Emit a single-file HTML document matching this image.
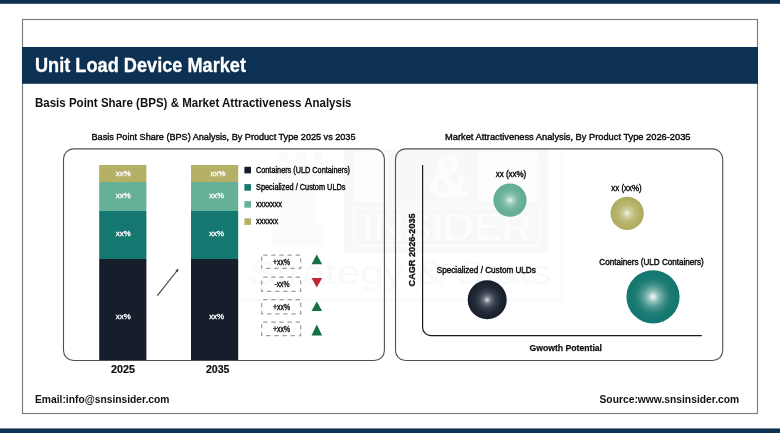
<!DOCTYPE html>
<html lang="en">
<head>
<meta charset="utf-8">
<title>Unit Load Device Market</title>
<style>
html,body{margin:0;padding:0;background:#fff;}
body{width:780px;height:433px;overflow:hidden;}
svg{display:block;font-family:"Liberation Sans", Arial, Helvetica, sans-serif;will-change:transform;}
text{white-space:pre;}
</style>
</head>
<body>
<svg width="780" height="433" viewBox="0 0 780 433">
<rect x="0" y="0" width="780" height="433" fill="#ffffff"/>
<g id="wm"><rect x="343.7" y="149.5" width="204.5" height="103.4" fill="#f7f8fa"/><rect x="354" y="151" width="35" height="51" rx="6" fill="#fdfdfe"/><rect x="478.4" y="151" width="61" height="51" rx="6" fill="#fdfdfe"/><rect x="354" y="208" width="185.3" height="37.5" fill="none" stroke="#fdfdfe" stroke-width="1.6"/><path d="M280 152 h8 v8 h8 v-8 h10 v8 h8 v-8 h8 v22 h-6 v50 h8 v22 h-52 v-22 h8 v-50 h-6 z" fill="#fafbfc"/><rect x="240" y="299" width="323" height="2.6" fill="#f9fafb"/><rect x="560.4" y="149" width="2.6" height="150" fill="#f9fafb"/><text x="449" y="197" font-size="59" font-weight="bold" fill="#fdfdfe" text-anchor="middle">&amp;</text><text x="362" y="240" font-size="36" font-weight="normal" fill="#fdfdfe" textLength="170" lengthAdjust="spacingAndGlyphs">INSIDER</text><text x="248" y="284" font-size="34" font-weight="normal" fill="#f8f9fa" textLength="304" lengthAdjust="spacingAndGlyphs">Strategy &amp; Stats</text></g>
<rect x="0" y="0" width="780" height="3.8" fill="#0d3152"/>
<rect x="0" y="428.45" width="780" height="4.8" fill="#0d3152"/>
<rect x="22.5" y="19.5" width="735" height="394" fill="none" stroke="#7c7c7c" stroke-width="1.15"/>
<rect x="22" y="47" width="736" height="36.8" fill="#0d3152"/>
<text x="35" y="72" font-size="20.3" font-weight="bold" fill="#ffffff" textLength="211" lengthAdjust="spacingAndGlyphs" stroke="#ffffff" stroke-width="0.3" stroke-linejoin="round">Unit Load Device Market</text>
<text x="35" y="107" font-size="13" font-weight="bold" fill="#111111" textLength="316.5" lengthAdjust="spacingAndGlyphs">Basis Point Share (BPS) &amp; Market Attractiveness Analysis</text>
<text x="91.5" y="139.6" font-size="9.6" font-weight="normal" fill="#0a0a0a" textLength="264" lengthAdjust="spacingAndGlyphs" stroke="#0a0a0a" stroke-width="0.4" stroke-linejoin="round">Basis Point Share (BPS) Analysis, By Product Type 2025 vs 2035</text>
<text x="445" y="139.6" font-size="9.6" font-weight="normal" fill="#0a0a0a" textLength="245.5" lengthAdjust="spacingAndGlyphs" stroke="#0a0a0a" stroke-width="0.4" stroke-linejoin="round">Market Attractiveness Analysis, By Product Type 2026-2035</text>
<rect x="63.5" y="148.9" width="320.9" height="211.6" rx="10" ry="10" fill="none" stroke="#505050" stroke-width="1.1"/>
<rect x="395.5" y="148.9" width="327.2" height="211.6" rx="10" ry="10" fill="none" stroke="#505050" stroke-width="1.1"/>
<rect x="99.2" y="165" width="47.2" height="17" fill="#b4b166"/>
<rect x="99.2" y="182" width="47.2" height="29" fill="#66b097"/>
<rect x="99.2" y="211" width="47.2" height="48" fill="#147870"/>
<rect x="99.2" y="259" width="47.2" height="101" fill="#161e2b"/>
<rect x="191" y="165" width="47.2" height="17" fill="#b4b166"/>
<rect x="191" y="182" width="47.2" height="29" fill="#66b097"/>
<rect x="191" y="211" width="47.2" height="48" fill="#147870"/>
<rect x="191" y="259" width="47.2" height="101" fill="#161e2b"/>
<text x="123.2" y="175.6" font-size="8.1" font-weight="normal" fill="#ffffff" text-anchor="middle" textLength="14.8" lengthAdjust="spacingAndGlyphs" stroke="#ffffff" stroke-width="0.35" stroke-linejoin="round">xx%</text>
<text x="123.2" y="197.6" font-size="8.1" font-weight="normal" fill="#ffffff" text-anchor="middle" textLength="14.8" lengthAdjust="spacingAndGlyphs" stroke="#ffffff" stroke-width="0.35" stroke-linejoin="round">xx%</text>
<text x="123.2" y="236.1" font-size="8.1" font-weight="normal" fill="#ffffff" text-anchor="middle" textLength="14.8" lengthAdjust="spacingAndGlyphs" stroke="#ffffff" stroke-width="0.35" stroke-linejoin="round">xx%</text>
<text x="123.2" y="318.6" font-size="8.1" font-weight="normal" fill="#ffffff" text-anchor="middle" textLength="14.8" lengthAdjust="spacingAndGlyphs" stroke="#ffffff" stroke-width="0.35" stroke-linejoin="round">xx%</text>
<text x="218" y="175.9" font-size="8.1" font-weight="normal" fill="#ffffff" text-anchor="middle" textLength="14.8" lengthAdjust="spacingAndGlyphs" stroke="#ffffff" stroke-width="0.35" stroke-linejoin="round">xx%</text>
<text x="216.6" y="197.6" font-size="8.1" font-weight="normal" fill="#ffffff" text-anchor="middle" textLength="14.8" lengthAdjust="spacingAndGlyphs" stroke="#ffffff" stroke-width="0.35" stroke-linejoin="round">xx%</text>
<text x="216.6" y="236.1" font-size="8.1" font-weight="normal" fill="#ffffff" text-anchor="middle" textLength="14.8" lengthAdjust="spacingAndGlyphs" stroke="#ffffff" stroke-width="0.35" stroke-linejoin="round">xx%</text>
<text x="216.6" y="318.6" font-size="8.1" font-weight="normal" fill="#ffffff" text-anchor="middle" textLength="14.8" lengthAdjust="spacingAndGlyphs" stroke="#ffffff" stroke-width="0.35" stroke-linejoin="round">xx%</text>
<text x="111" y="373" font-size="11.4" font-weight="bold" fill="#111111" textLength="24" lengthAdjust="spacingAndGlyphs" stroke="#111111" stroke-width="0.2" stroke-linejoin="round">2025</text>
<text x="206" y="373" font-size="11.4" font-weight="bold" fill="#111111" textLength="23.5" lengthAdjust="spacingAndGlyphs" stroke="#111111" stroke-width="0.2" stroke-linejoin="round">2035</text>
<line x1="157.3" y1="295.7" x2="177.6" y2="270" stroke="#444" stroke-width="1.2"/>
<path d="M178.7 268.5 L177.8 272.2 L175.4 270.2 Z" fill="#444"/>
<rect x="244.4" y="166.8" width="6.6" height="6.6" fill="#161e2b"/>
<text x="256" y="172.7" font-size="8.5" font-weight="normal" fill="#0a0a0a" textLength="94" lengthAdjust="spacingAndGlyphs" stroke="#0a0a0a" stroke-width="0.4" stroke-linejoin="round">Containers (ULD Containers)</text>
<rect x="244.4" y="184.10000000000002" width="6.6" height="6.6" fill="#147870"/>
<text x="256" y="190.0" font-size="8.5" font-weight="normal" fill="#0a0a0a" textLength="89.5" lengthAdjust="spacingAndGlyphs" stroke="#0a0a0a" stroke-width="0.4" stroke-linejoin="round">Specialized / Custom ULDs</text>
<rect x="244.4" y="201.10000000000002" width="6.6" height="6.6" fill="#66b097"/>
<text x="256" y="207.0" font-size="8.5" font-weight="normal" fill="#0a0a0a" textLength="26" lengthAdjust="spacingAndGlyphs" stroke="#0a0a0a" stroke-width="0.4" stroke-linejoin="round">xxxxxxx</text>
<rect x="244.4" y="218.3" width="6.6" height="6.6" fill="#b4b166"/>
<text x="256" y="224.2" font-size="8.5" font-weight="normal" fill="#0a0a0a" textLength="22.3" lengthAdjust="spacingAndGlyphs" stroke="#0a0a0a" stroke-width="0.4" stroke-linejoin="round">xxxxxx</text>
<rect x="261.7" y="255.2" width="39" height="13.199999999999989" fill="none" stroke="#989da6" stroke-width="1.2" stroke-dasharray="4.3 3.8" stroke-dashoffset="-1.5"/>
<text x="281.5" y="264.59999999999997" font-size="8.2" font-weight="normal" fill="#0a0a0a" text-anchor="middle" textLength="17" lengthAdjust="spacingAndGlyphs" stroke="#0a0a0a" stroke-width="0.35" stroke-linejoin="round">+xx%</text>
<rect x="261.7" y="277.2" width="39" height="14.199999999999989" fill="none" stroke="#989da6" stroke-width="1.2" stroke-dasharray="4.3 3.8" stroke-dashoffset="-1.5"/>
<text x="282" y="287.09999999999997" font-size="8.2" font-weight="normal" fill="#0a0a0a" text-anchor="middle" textLength="15" lengthAdjust="spacingAndGlyphs" stroke="#0a0a0a" stroke-width="0.35" stroke-linejoin="round">-xx%</text>
<rect x="261.7" y="299.6" width="39" height="14.199999999999989" fill="none" stroke="#989da6" stroke-width="1.2" stroke-dasharray="4.3 3.8" stroke-dashoffset="-1.5"/>
<text x="281.5" y="309.50000000000006" font-size="8.2" font-weight="normal" fill="#0a0a0a" text-anchor="middle" textLength="17" lengthAdjust="spacingAndGlyphs" stroke="#0a0a0a" stroke-width="0.35" stroke-linejoin="round">+xx%</text>
<rect x="261.7" y="322.2" width="39" height="13.400000000000034" fill="none" stroke="#989da6" stroke-width="1.2" stroke-dasharray="4.3 3.8" stroke-dashoffset="-1.5"/>
<text x="281.5" y="331.7" font-size="8.2" font-weight="normal" fill="#0a0a0a" text-anchor="middle" textLength="17" lengthAdjust="spacingAndGlyphs" stroke="#0a0a0a" stroke-width="0.35" stroke-linejoin="round">+xx%</text>
<path d="M316.8 254.5 L322.1 264.3 L311.5 264.3 Z" fill="#15703f"/>
<path d="M311.5 278 L322.1 278 L316.8 287.6 Z" fill="#c0273a"/>
<path d="M316.8 301.5 L322.1 311 L311.5 311 Z" fill="#15703f"/>
<path d="M316.8 324.6 L322.1 335.4 L311.5 335.4 Z" fill="#15703f"/>
<path d="M422.6 165 L422.6 327.4 A8.2 8.2 0 0 0 430.8 335.6 L701.8 335.6" fill="none" stroke="#1a1a1a" stroke-width="1.2"/>
<text x="0" y="0" font-size="9.9" font-weight="bold" fill="#111111" text-anchor="middle" textLength="73" lengthAdjust="spacingAndGlyphs" stroke="#111111" stroke-width="0.3" stroke-linejoin="round" transform="translate(414.7 249.9) rotate(-90)">CAGR 2026-2035</text>
<text x="529.5" y="350.8" font-size="9.6" font-weight="bold" fill="#111111" textLength="72.5" lengthAdjust="spacingAndGlyphs" stroke="#111111" stroke-width="0.25" stroke-linejoin="round">Gwowth Potential</text>
<defs>
<radialGradient id="g1" cx="50%" cy="50%" r="50%"><stop offset="0" stop-color="#eef7f3"/><stop offset="0.1" stop-color="#c8e2d8"/><stop offset="0.25" stop-color="#9ccbb9"/><stop offset="0.5" stop-color="#74b7a0"/><stop offset="0.75" stop-color="#66b097"/><stop offset="1" stop-color="#60ab92"/></radialGradient>
<radialGradient id="g2" cx="50%" cy="50%" r="50%"><stop offset="0" stop-color="#f6f6ea"/><stop offset="0.1" stop-color="#e2e1c0"/><stop offset="0.25" stop-color="#cfcd9c"/><stop offset="0.5" stop-color="#bcb977"/><stop offset="0.75" stop-color="#b4b166"/><stop offset="1" stop-color="#aeab60"/></radialGradient>
<radialGradient id="g3" cx="50%" cy="50%" r="50%"><stop offset="0" stop-color="#e4e5e9"/><stop offset="0.08" stop-color="#a9adb5"/><stop offset="0.2" stop-color="#6a707c"/><stop offset="0.4" stop-color="#3b4251"/><stop offset="0.65" stop-color="#222a38"/><stop offset="1" stop-color="#161e2b"/></radialGradient>
<radialGradient id="g4" cx="50%" cy="50%" r="50%"><stop offset="0" stop-color="#f2f8f7"/><stop offset="0.08" stop-color="#cfe4e2"/><stop offset="0.22" stop-color="#86bab5"/><stop offset="0.42" stop-color="#4a948e"/><stop offset="0.64" stop-color="#1f7d76"/><stop offset="0.85" stop-color="#147870"/><stop offset="1" stop-color="#147870"/></radialGradient>
</defs>
<circle cx="510" cy="200.15" r="16.6" fill="url(#g1)"/>
<circle cx="627.2" cy="213.3" r="16.6" fill="url(#g2)"/>
<circle cx="487.2" cy="299.8" r="19.5" fill="url(#g3)"/>
<circle cx="653" cy="296.8" r="26.6" fill="url(#g4)"/>
<text x="511" y="176.8" font-size="8.4" font-weight="normal" fill="#0a0a0a" text-anchor="middle" textLength="30.5" lengthAdjust="spacingAndGlyphs" stroke="#0a0a0a" stroke-width="0.4" stroke-linejoin="round">xx (xx%)</text>
<text x="626.5" y="190.8" font-size="8.4" font-weight="normal" fill="#0a0a0a" text-anchor="middle" textLength="30.5" lengthAdjust="spacingAndGlyphs" stroke="#0a0a0a" stroke-width="0.4" stroke-linejoin="round">xx (xx%)</text>
<text x="436.8" y="273.2" font-size="8.8" font-weight="normal" fill="#0a0a0a" textLength="99" lengthAdjust="spacingAndGlyphs" stroke="#0a0a0a" stroke-width="0.42" stroke-linejoin="round">Specialized / Custom ULDs</text>
<text x="599.3" y="265.1" font-size="8.8" font-weight="normal" fill="#0a0a0a" textLength="104.5" lengthAdjust="spacingAndGlyphs" stroke="#0a0a0a" stroke-width="0.42" stroke-linejoin="round">Containers (ULD Containers)</text>
<text x="35" y="403" font-size="11.7" font-weight="bold" fill="#111111" textLength="134.5" lengthAdjust="spacingAndGlyphs">Email:info@snsinsider.com</text>
<text x="599.5" y="403" font-size="11.7" font-weight="bold" fill="#111111" textLength="139.7" lengthAdjust="spacingAndGlyphs">Source:www.snsinsider.com</text>
</svg>
</body>
</html>
